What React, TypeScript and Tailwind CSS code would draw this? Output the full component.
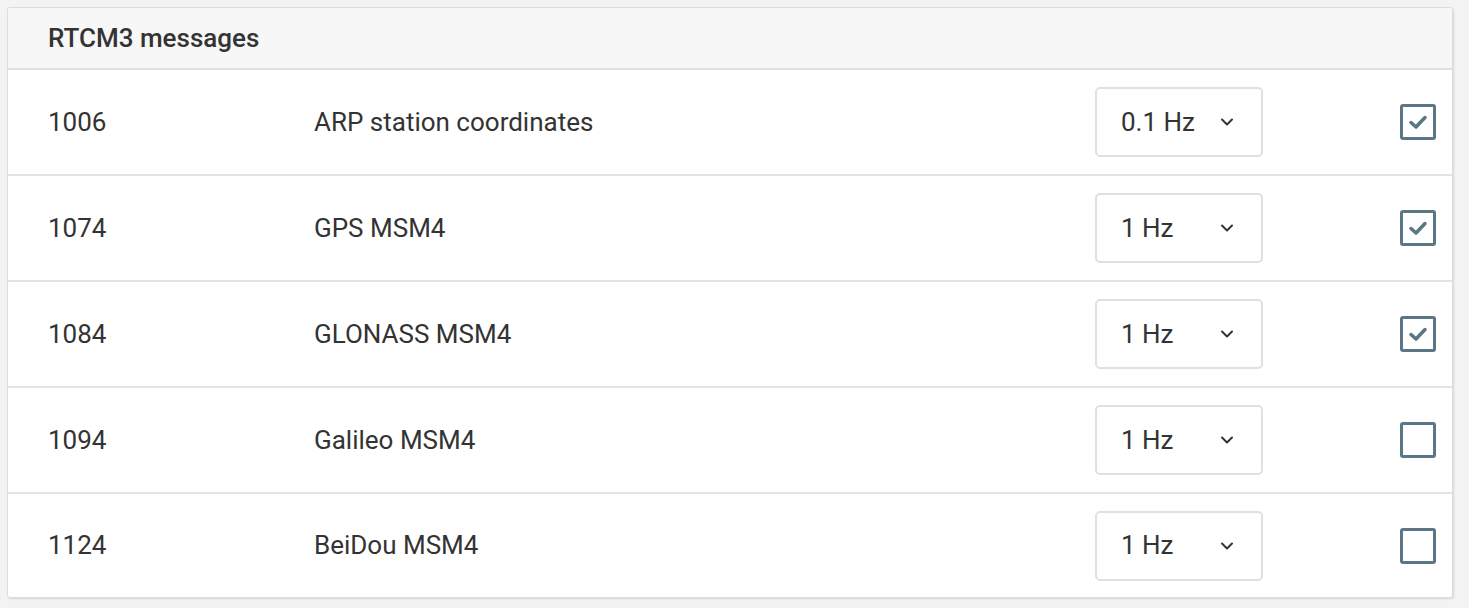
import { ChevronDown } from 'lucide-react'

interface Message {
  id: string
  name: string
  rate: string
  enabled: boolean
}

const messages: Message[] = [
  { id: '1006', name: 'ARP station coordinates', rate: '0.1 Hz', enabled: true },
  { id: '1074', name: 'GPS MSM4', rate: '1 Hz', enabled: true },
  { id: '1084', name: 'GLONASS MSM4', rate: '1 Hz', enabled: true },
  { id: '1094', name: 'Galileo MSM4', rate: '1 Hz', enabled: false },
  { id: '1124', name: 'BeiDou MSM4', rate: '1 Hz', enabled: false },
]

function Checkbox({ checked }: { checked: boolean }) {
  return (
    <div className="w-[36px] h-[36px] rounded-[3px] border-[3px] border-[#5b7684] flex items-center justify-center">
      {checked && (
        <svg width="20" height="16" viewBox="0 0 20 16" fill="none">
          <path d="M3 8.5 L8 13 L17 3.5" stroke="#5b7684" strokeWidth="3.5" strokeLinecap="round" strokeLinejoin="round" />
        </svg>
      )}
    </div>
  )
}

export default function App() {
  return (
    <div className="w-[1469px] h-[608px] bg-[#f3f3f3] pt-[7px] pl-[7px]" style={{ fontFamily: 'Roboto, "Liberation Sans", sans-serif' }}>
      <div className="w-[1446px] bg-white border border-[#dcdcdc] rounded-[3px] shadow-[1px_1px_2px_rgba(0,0,0,0.12)] overflow-hidden">
        <div className="h-[62px] bg-[#f7f7f7] border-b-2 border-[#e0e0e0] flex items-center pl-[40px]">
          <span className="text-[26px] font-medium text-[#333]">RTCM3 messages</span>
        </div>
        {messages.map((m, i) => {
          const last = i === messages.length - 1
          return (
            <div
              key={m.id}
              className={`flex items-center pl-[40px] text-[26px] text-[#333] ${last ? 'h-[103px]' : 'h-[106px] border-b-2 border-[#e3e3e3]'}`}
            >
              <div className="w-[266px]">{m.id}</div>
              <div className="flex-1">{m.name}</div>
              <div className="w-[168px] h-[70px] border-2 border-[#e0e0e0] rounded-[5px] flex items-center justify-between pl-[24px] pr-[24px]">
                <span>{m.rate}</span>
                <ChevronDown size={20} strokeWidth={2.4} color="#333" />
              </div>
              <div className="w-[189px] flex justify-end pr-[16px]">
                <Checkbox checked={m.enabled} />
              </div>
            </div>
          )
        })}
      </div>
    </div>
  )
}
